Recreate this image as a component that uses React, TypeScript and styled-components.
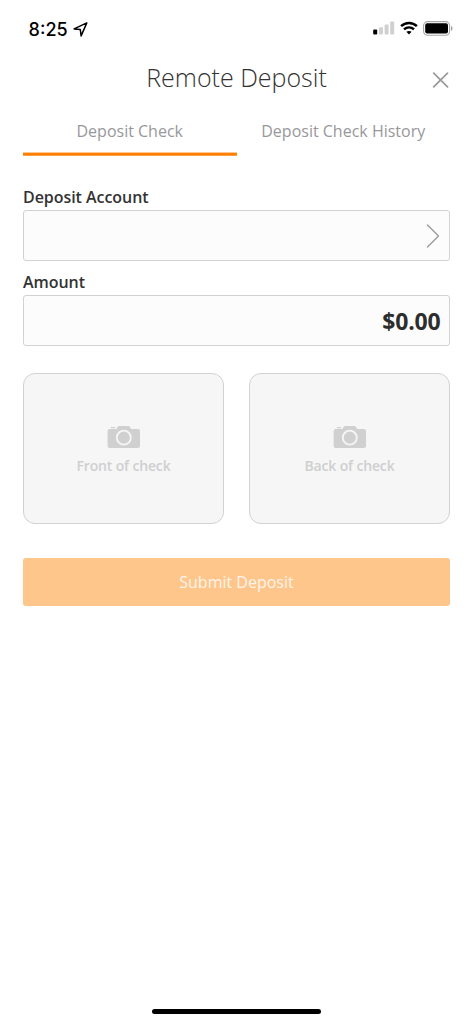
import React from 'react';
import styled, { createGlobalStyle } from 'styled-components';

const GlobalStyle = createGlobalStyle`
  * { box-sizing: border-box; }
  body { margin: 0; background: #fff; }
  button { font: inherit; margin: 0; padding: 0; border: 0; background: none; }
`;

const Screen = styled.div`
  width: 473px;
  height: 1024px;
  display: flex;
  flex-direction: column;
  background: #fff;
  font-family: 'Open Sans', 'Noto Sans', sans-serif;
  overflow: hidden;
`;

const StatusBar = styled.div`
  height: 56px;
  padding: 0 20px 0 28.6px;
  display: flex;
  align-items: center;
  justify-content: space-between;
`;

const Clock = styled.div`
  display: flex;
  align-items: center;
  gap: 5px;
  height: 26px;
  padding-top: 2px;
  font-family: Inter, 'Liberation Sans', sans-serif;
  font-size: 18px;
  font-weight: 500;
  color: #000;
`;

const StatusIcons = styled.div`
  display: flex;
  align-items: center;
  gap: 5px;
`;

const Header = styled.header`
  height: 44px;
  padding: 0 23px;
  display: grid;
  grid-template-columns: 18px 1fr 18px;
  align-items: center;
`;

const Title = styled.h1`
  margin: 0;
  padding-bottom: 2px;
  text-align: center;
  font-size: 25px;
  line-height: 36px;
  font-weight: 300;
  color: #333;
`;

const CloseButton = styled.button`
  width: 18px;
  height: 18px;
  padding-top: 3px;
  display: flex;
`;

const Tabs = styled.nav`
  height: 56px;
  margin: 0 23px;
  display: grid;
  grid-template-columns: 1fr 1fr;
`;

const Tab = styled.button<{ $active?: boolean }>`
  && { padding-top: 5px; }
  ${(p) =>
    p.$active &&
    `&& {
      background: linear-gradient(#ffc890 0 1px, #ff8000 1px 3px, #ff9c3c 3px) left bottom / 100% 4px no-repeat;
    }`}
  font-size: 16px;
  line-height: 22px;
  color: #98989b;
`;

const Form = styled.main`
  flex: 1;
  padding: 30px 23px 0;
  display: flex;
  flex-direction: column;
`;

const Label = styled.label`
  height: 24px;
  line-height: 22px;
  font-size: 16px;
  font-weight: 600;
  letter-spacing: -0.05px;
  color: #333;
`;

const Field = styled.div<{ $gap: number }>`
  height: 51px;
  margin-bottom: ${(p) => p.$gap}px;
  padding: 0 9px;
  display: flex;
  align-items: center;
  justify-content: flex-end;
  border: 1px solid #d2d2d2;
  border-radius: 3px;
  background: #fcfcfc;
`;

const Amount = styled.span`
  margin-right: -0.5px;
  font-size: 23px;
  font-weight: 700;
  letter-spacing: -0.2px;
  color: #2d2d2d;
`;

const Photos = styled.div`
  display: grid;
  grid-template-columns: 1fr 1fr;
  gap: 25px;
`;

const PhotoCard = styled.button`
  && { border: 1px solid #d2d2d2; }
  height: 151px;
  display: flex;
  flex-direction: column;
  align-items: center;
  justify-content: flex-start;
  padding-top: 51px;
  border-radius: 12px;
  && { background: #f6f6f6; }
`;

const PhotoLabel = styled.span`
  margin-top: 7px;
  font-size: 14px;
  line-height: 20px;
  font-weight: 600;
  letter-spacing: -0.16px;
  color: #cfcfcf;
`;

const Submit = styled.button`
  && { background: #ffc68b; }
  height: 48px;
  margin-top: 34px;
  border-radius: 3px;
  font-size: 16px;
  color: #fff4e9;
`;

const HomeIndicator = styled.div`
  width: 169px;
  height: 5px;
  margin: 0 auto 10px;
  border-radius: 3px;
  background: #000;
`;

const LocationIcon = () => (
  <svg width="15" height="15" viewBox="0 0 15 15" fill="none" stroke="#000" strokeWidth="1.5" strokeLinejoin="round">
    <path d="M13.8 .9 1.1 6.9 7.3 7.5 8.1 13.9Z" />
  </svg>
);

const SignalIcon = () => (
  <svg width="22" height="14" viewBox="0 0 22 14">
    <rect x="0.2" y="8.6" width="4" height="5" rx="1" fill="#000" />
    <rect x="6" y="6.2" width="4" height="7.4" rx="1" fill="#d0d0d0" />
    <rect x="11.6" y="3.4" width="4" height="10.2" rx="1" fill="#d0d0d0" />
    <rect x="17.2" y="0.4" width="4" height="13.2" rx="1" fill="#d0d0d0" />
  </svg>
);

const WifiIcon = () => (
  <svg width="18" height="14" viewBox="0 0 18 14" fill="none" stroke="#000" strokeWidth="2.5">
    <path d="M1.1 5.2C5.6.8 12.4.8 16.9 5.2" />
    <path d="M4 8.4C6.9 5.7 11.1 5.7 14 8.4" />
    <path d="M9 13.4 6.4 10.8C8 9.6 10 9.6 11.6 10.8Z" fill="#000" stroke="none" />
  </svg>
);

const BatteryIcon = () => (
  <svg width="30" height="15" viewBox="0 0 30 15">
    <rect x="0.6" y="0.6" width="26" height="13.6" rx="4" fill="none" stroke="#a6a6a6" strokeWidth="1.1" />
    <rect x="2.2" y="2.2" width="22.8" height="10.4" rx="2" fill="#000" />
    <path d="M28 5v4.8c2-.8 2-4 0-4.8Z" fill="#a0a0a0" />
  </svg>
);

const CloseIcon = () => (
  <svg width="17" height="16" viewBox="0 0 17 16" fill="none" stroke="#999" strokeWidth="1.7" strokeLinecap="round">
    <path d="M1.7 1.1 15.5 14.9M15.5 1.1 1.7 14.9" />
  </svg>
);

const ChevronIcon = () => (
  <svg width="14" height="24" viewBox="0 0 14 24" fill="none" stroke="#999" strokeWidth="1.3" strokeLinecap="round" strokeLinejoin="round">
    <path d="M1.5 1 12.5 12 1.5 23" />
  </svg>
);

const CameraIcon = () => (
  <svg width="34" height="24" viewBox="0 0 34 24">
    <path
      d="M2.6 4H9C10.2 4 10.3 1 12 1H21.6C23.3 1 23.2 4 24.6 4H31Q33 4 33 6V21Q33 23 31 23H2.5Q.6 23 .6 21V6Q.6 4 2.6 4Z"
      fill="#d0d0d0"
    />
    <rect x="3.6" y="2" width="4.6" height="1.2" rx="0.6" fill="#d0d0d0" />
    <circle cx="16.8" cy="12.7" r="7" fill="none" stroke="#f6f6f6" strokeWidth="1.8" />
  </svg>
);

export default function App() {
  return (
    <Screen>
      <GlobalStyle />
      <StatusBar>
        <Clock>
          8:25
          <LocationIcon />
        </Clock>
        <StatusIcons>
          <SignalIcon />
          <WifiIcon />
          <BatteryIcon />
        </StatusIcons>
      </StatusBar>
      <Header>
        <span />
        <Title>Remote Deposit</Title>
        <CloseButton aria-label="Close">
          <CloseIcon />
        </CloseButton>
      </Header>
      <Tabs>
        <Tab $active>Deposit Check</Tab>
        <Tab>Deposit Check History</Tab>
      </Tabs>
      <Form>
        <Label>Deposit Account</Label>
        <Field $gap={10}>
          <ChevronIcon />
        </Field>
        <Label>Amount</Label>
        <Field $gap={27}>
          <Amount>$0.00</Amount>
        </Field>
        <Photos>
          <PhotoCard>
            <CameraIcon />
            <PhotoLabel>Front of check</PhotoLabel>
          </PhotoCard>
          <PhotoCard>
            <CameraIcon />
            <PhotoLabel>Back of check</PhotoLabel>
          </PhotoCard>
        </Photos>
        <Submit>Submit Deposit</Submit>
      </Form>
      <HomeIndicator />
    </Screen>
  );
}
